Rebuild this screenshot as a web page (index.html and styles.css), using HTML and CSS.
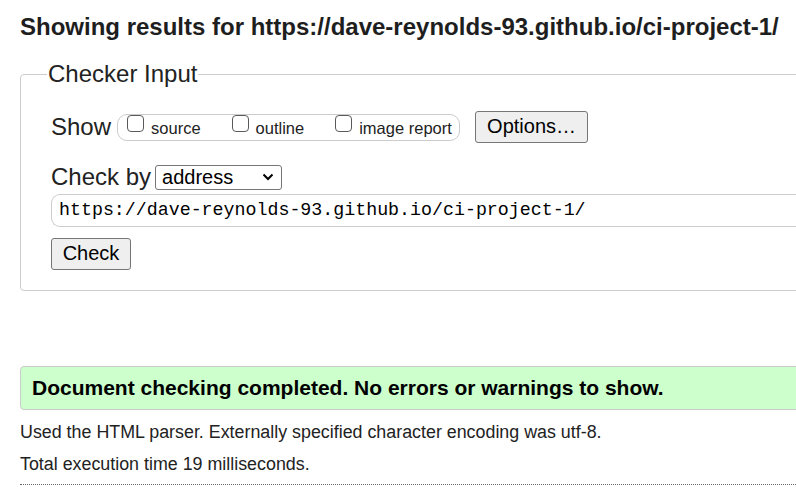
FILE: index.html
```html
<!DOCTYPE html>
<html>
<head>
<meta charset="utf-8">
<link rel="stylesheet" href="styles.css">
</head>
<body>
<h2 class="title">Showing results for https://dave-reynolds-93.github.io/ci-project-1/</h2>
<fieldset class="checker">
  <legend class="legend">Checker Input</legend>
  <div class="row show-row">
    <span class="lbl">Show</span>
    <span class="opts">
      <label class="opt"><span class="cb"></span><span class="otext">source</span></label>
      <label class="opt"><span class="cb"></span><span class="otext">outline</span></label>
      <label class="opt"><span class="cb"></span><span class="otext">image report</span></label>
    </span>
    <span class="btn options">Options…</span>
  </div>
  <div class="row by-row">
    <span class="lbl">Check by</span>
    <span class="select">address
      <svg class="chev" width="12" height="8" viewBox="0 0 12 8"><path d="M1.5 1.5 L6 6 L10.5 1.5" fill="none" stroke="#000" stroke-width="2"/></svg>
    </span>
  </div>
  <div class="url">https://dave-reynolds-93.github.io/ci-project-1/</div>
  <div class="row"><span class="btn check">Check</span></div>
</fieldset>
<div class="success">Document checking completed. No errors or warnings to show.</div>
<p class="info">Used the HTML parser. Externally specified character encoding was utf-8.</p>
<p class="info">Total execution time 19 milliseconds.</p>
<hr class="dots">
</body>
</html>
```
FILE: styles.css
```css
html, body { margin: 0; padding: 0; }
body {
  padding: 0 0 0 20px;
  font-family: "Liberation Sans", Arial, sans-serif;
  color: #222;
  overflow: hidden;
  width: 900px;
  background: #fff;
}
.title {
  margin: 0;
  padding-top: 13px;
  font-size: 24px;
  line-height: 28px;
  font-weight: bold;
  color: #1e1e1e;
}
.checker {
  margin: 21px 0 0 0;
  width: 860px;
  border: 1px solid #ccc;
  border-radius: 4px;
  padding: 25px 0 20px 30px;
  box-sizing: border-box;
}
.legend {
  font-size: 24px;
  padding: 0 1px;
  margin-left: -4px;
  line-height: 24px;
  color: #222;
}
.row { display: flex; align-items: center; }
.lbl { font-size: 24px; color: #222; }
.show-row { margin-top: 0; }
.opts {
  display: inline-flex;
  align-items: flex-start;
  margin-left: 6px;
  height: 27px;
  width: 343px;
  box-sizing: border-box;
  border: 1px solid #ccc;
  border-radius: 10px;
  padding-left: 9px;
}
.opt {
  display: inline-flex;
  align-items: flex-start;
  font-size: 16.5px;
  margin-right: 31px;
  color: #222;
}
.opt:last-child { margin-right: 0; }
.otext { padding-top: 3px; line-height: 20px; }
.cb {
  display: inline-block;
  width: 17px;
  height: 17px;
  border: 1.5px solid #5a5a5a;
  border-radius: 4px;
  margin-right: 7px;
  box-sizing: border-box;
  background: #fff;
}
.btn {
  display: inline-block;
  background: #efefef;
  border: 1px solid #767676;
  border-radius: 3px;
  font-size: 20px;
  color: #000;
  box-sizing: border-box;
}
.options {
  margin-left: 15px;
  width: 113px;
  height: 32px;
  line-height: 28px;
  text-align: center;
}
.by-row { margin-top: 20px; }
.select {
  margin-left: 4px;
  width: 127px;
  height: 25px;
  border: 1px solid #767676;
  border-radius: 3px;
  box-sizing: border-box;
  font-size: 20px;
  line-height: 22px;
  padding-left: 6px;
  display: inline-flex;
  align-items: center;
  justify-content: space-between;
  color: #000;
}
.chev { margin-right: 7px; }
.url {
  margin-top: 3px;
  height: 33px;
  border: 1px solid #ccc;
  border-right: none;
  border-radius: 9px 0 0 9px;
  box-sizing: border-box;
  font-family: "Liberation Mono", monospace;
  font-size: 18.3px;
  line-height: 31px;
  padding-left: 7px;
  color: #000;
}
.check {
  margin-top: 11px;
  width: 80px;
  height: 32px;
  line-height: 29px;
  text-align: center;
}
.success {
  margin-top: 75px;
  width: 860px;
  box-sizing: border-box;
  height: 44px;
  background: #ccffcc;
  border: 1px solid #ccc;
  border-radius: 4px;
  padding-left: 11px;
  font-size: 21px;
  font-weight: bold;
  line-height: 42px;
  color: #000;
}
.info {
  margin: 12px 0 0 0;
  font-size: 17.85px;
  line-height: 20px;
  color: #222;
}
.dots {
  margin: 10px 0 0 0;
  border: none;
  border-top: 1px dotted #666;
  width: 860px;
}
```
